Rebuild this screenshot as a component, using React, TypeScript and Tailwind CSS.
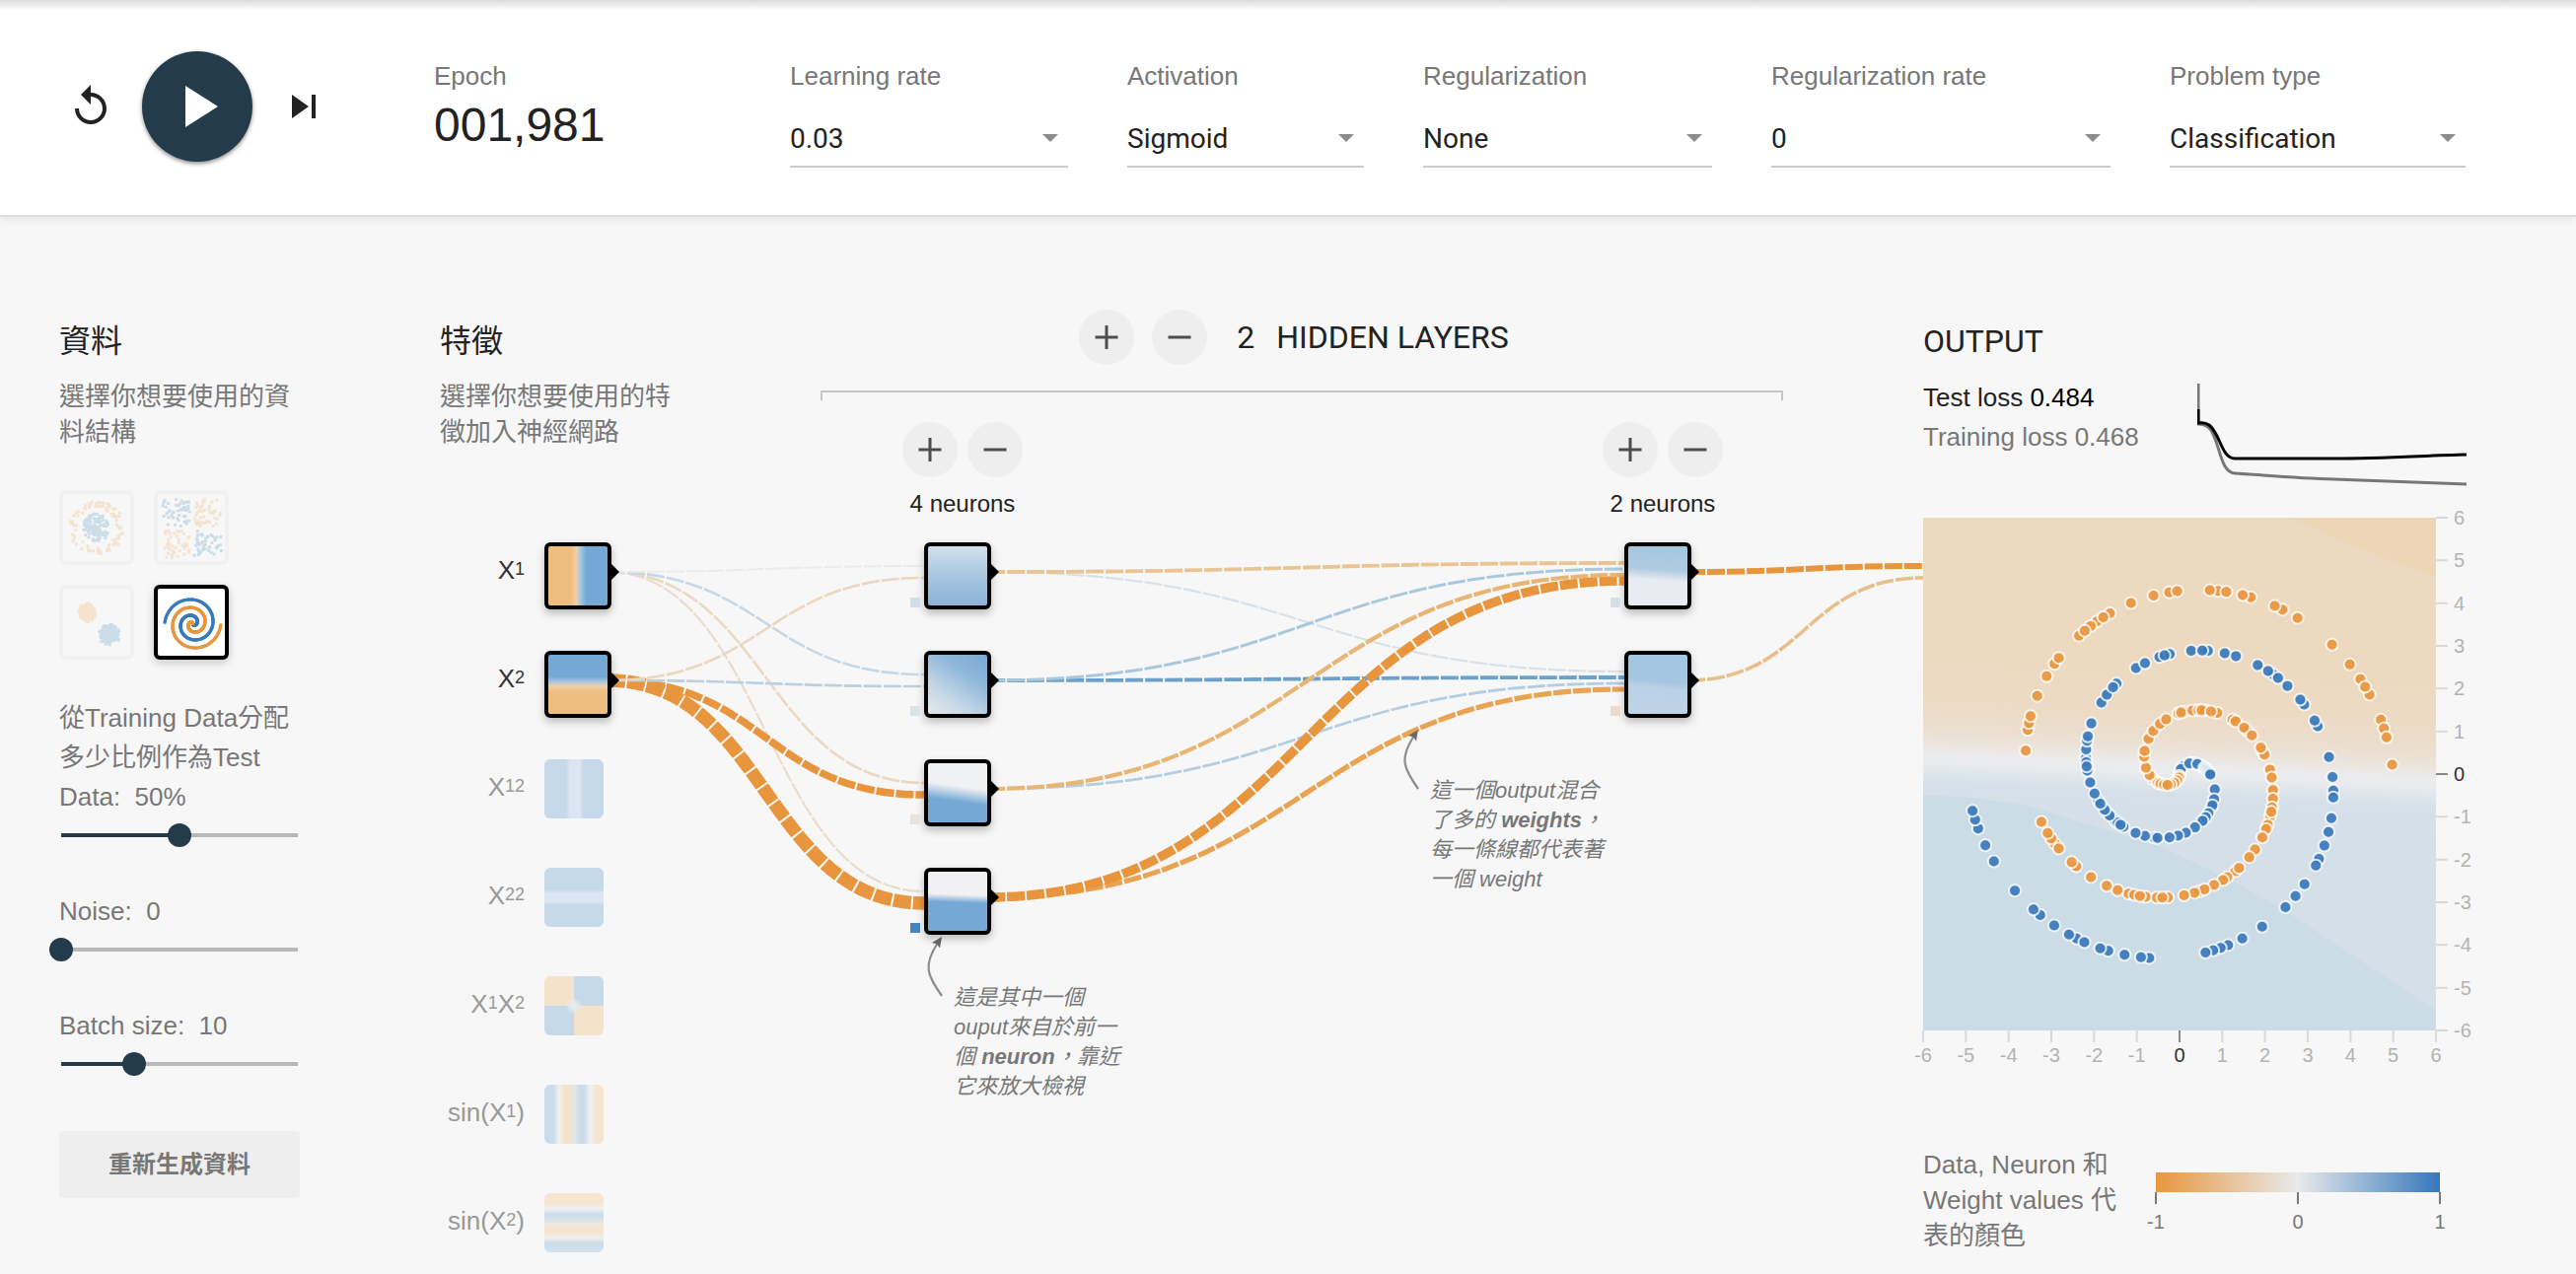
import React, { useLayoutEffect, useRef, useState } from "react";

const ORANGE = "#e8963e";

/* ---------- small helpers ---------- */

function seeded(seed: number) {
  let a = seed;
  return () => {
    a = (a + 0x6d2b79f5) | 0;
    let t = Math.imul(a ^ (a >>> 15), 1 | a);
    t = (t + Math.imul(t ^ (t >>> 7), 61 | t)) ^ t;
    return ((t ^ (t >>> 14)) >>> 0) / 4294967296;
  };
}

type Dot = { x: number; y: number; c: string };

function circleDots(): Dot[] {
  const rnd = seeded(7);
  const out: Dot[] = [];
  for (let i = 0; i < 120; i++) {
    const a = rnd() * Math.PI * 2;
    const r = rnd() * 14;
    out.push({ x: 34 + r * Math.cos(a), y: 34 + r * Math.sin(a), c: "#cbdde9" });
  }
  for (let i = 0; i < 90; i++) {
    const a = rnd() * Math.PI * 2;
    const r = 20 + rnd() * 8;
    out.push({ x: 34 + r * Math.cos(a), y: 34 + r * Math.sin(a), c: "#f5e3cf" });
  }
  return out;
}

function xorDots(): Dot[] {
  const rnd = seeded(21);
  const out: Dot[] = [];
  for (let i = 0; i < 190; i++) {
    let x = rnd() * 56 - 28;
    let y = rnd() * 56 - 28;
    x += x > 0 ? 2 : -2;
    y += y > 0 ? 2 : -2;
    out.push({ x: 35 + x, y: 35 + y, c: x * y > 0 ? "#cbdde9" : "#f5e3cf" });
  }
  return out;
}

function gaussDots(): Dot[] {
  const rnd = seeded(5);
  const out: Dot[] = [];
  const blob = (cx: number, cy: number, size: number, c: string) => {
    for (let i = 0; i < 220; i++) {
      const a = rnd() * Math.PI * 2;
      const r = ((rnd() + rnd() + rnd()) / 3) * size;
      out.push({ x: cx + r * Math.cos(a), y: cy + r * Math.sin(a), c });
    }
  };
  blob(24, 24, 11, "#f5e3cf");
  blob(47, 46, 13, "#cbdde9");
  return out;
}

function spiralAt(i: number, sign: number) {
  const r = i * 0.02;
  const t = 0.7 * Math.PI * r;
  return { x: sign * r * Math.sin(t), y: sign * r * Math.cos(t) };
}

function spiralDots(): Dot[] {
  const out: Dot[] = [];
  for (let i = 0; i < 250; i++) {
    const b = spiralAt(i, 1);
    out.push({ x: 35.5 + b.x * 5.7, y: 35.5 + b.y * 5.7, c: "#3a7abb" });
  }
  for (let i = 0; i < 250; i++) {
    const o = spiralAt(i, -1);
    out.push({ x: 35.5 + o.x * 5.7, y: 35.5 + o.y * 5.7, c: ORANGE });
  }
  return out;
}

/* ---------- header ---------- */

function Picker({ id, label, value }: { id: string; label: string; value: string }) {
  return (
    <div className="min-w-0">
      <label htmlFor={id} className="block text-[26px] leading-9 text-[#777]">
        {label}
      </label>
      <div className="relative mt-[25px] border-b-2 border-[#ccc]">
        <select
          id={id}
          defaultValue={value}
          className="h-12 w-full appearance-none bg-transparent pr-10 pb-1.5 text-[28px] text-[#222] outline-none font-['Roboto',sans-serif]"
        >
          <option>{value}</option>
        </select>
        <svg className="pointer-events-none absolute top-4 right-[10px] h-2 w-4" viewBox="0 0 16 8">
          <path d="M0 0h16l-8 8z" fill="#8c8c8c" />
        </svg>
      </div>
    </div>
  );
}

function Header() {
  return (
    <header className="flex h-[220px] items-start border-b-2 border-[#dcdcdc] bg-white bg-[linear-gradient(#dadada,#ffffff_10px)] pr-28 pl-[68px] shadow-[0_0_10px_rgba(0,0,0,0.12)]">
      <div className="mt-[52px] flex shrink-0 items-center gap-7">
        <button aria-label="Reset" className="h-12 w-12 text-[#222]">
          <svg viewBox="0 0 24 24" fill="currentColor">
            <path d="M12 5V1L7 6l5 5V7c3.31 0 6 2.69 6 6s-2.69 6-6 6-6-2.69-6-6H4c0 4.42 3.58 8 8 8s8-3.58 8-8-3.58-8-8-8z" />
          </svg>
        </button>
        <button
          aria-label="Run"
          className="flex h-28 w-28 items-center justify-center rounded-full bg-[#233b4b] text-white shadow-[0_2px_4px_rgba(0,0,0,0.45)]"
        >
          <svg viewBox="0 0 24 24" fill="currentColor" className="h-[72px] w-[72px]">
            <path d="M8 5v14l11-7z" />
          </svg>
        </button>
        <button aria-label="Step" className="h-12 w-12 text-[#222]">
          <svg viewBox="0 0 24 24" fill="currentColor">
            <path d="M6 18l8.5-6L6 6v12zM16 6v12h2V6h-2z" />
          </svg>
        </button>
      </div>
      <div className="mt-[59px] ml-[108px] w-[361px] shrink-0">
        <div className="text-[26px] leading-9 text-[#777]">Epoch</div>
        <div className="text-5xl leading-[64px] text-[#222]">001,981</div>
      </div>
      <div className="mt-[59px] grid flex-1 grid-cols-[282fr_240fr_293fr_344fr_300fr] gap-[60px]">
        <Picker id="rate" label="Learning rate" value="0.03" />
        <Picker id="activation" label="Activation" value="Sigmoid" />
        <Picker id="regularization" label="Regularization" value="None" />
        <Picker id="regrate" label="Regularization rate" value="0" />
        <Picker id="problem" label="Problem type" value="Classification" />
      </div>
    </header>
  );
}

/* ---------- data column ---------- */

function Thumb({ dots, label, selected }: { dots: Dot[]; label: string; selected?: boolean }) {
  return (
    <button
      aria-label={label}
      aria-pressed={!!selected}
      className={
        selected
          ? "h-[76px] w-[76px] rounded-md border-4 border-black bg-white shadow-[0_3px_10px_rgba(0,0,0,0.2)]"
          : "h-[76px] w-[76px] rounded-md border-4 border-[#f1f1f1]"
      }
    >
      <svg viewBox="0 0 68 68" className="block">
        {dots.map((d, i) => (
          <rect key={i} x={d.x - 1.5} y={d.y - 1.5} width="3" height="3" rx="0.7" fill={d.c} />
        ))}
      </svg>
    </button>
  );
}

function Slider(props: {
  id: string;
  label: string;
  min: number;
  max: number;
  value: number;
}) {
  const { id, label, min, max, value } = props;
  const part = ((value - min) / (max - min)) * 100;
  return (
    <div>
      <label htmlFor={id} className="block text-[26px] leading-10 whitespace-pre-wrap text-[#777]">
        {label}
      </label>
      <div className="relative mx-0.5 mt-[7px] flex h-6 items-center">
        <div className="h-1 w-full bg-[#b8b8b8]">
          <div className="h-full bg-[#233b4b]" style={{ width: `${part}%` }} />
        </div>
        <input
          id={id}
          type="range"
          min={min}
          max={max}
          defaultValue={value}
          className="absolute inset-y-0 -left-3 w-[calc(100%+24px)] appearance-none bg-transparent [&::-webkit-slider-thumb]:h-6 [&::-webkit-slider-thumb]:w-6 [&::-webkit-slider-thumb]:appearance-none [&::-webkit-slider-thumb]:rounded-full [&::-webkit-slider-thumb]:bg-[#233b4b]"
        />
      </div>
    </div>
  );
}

function DataColumn() {
  return (
    <section className="w-[244px] shrink-0">
      <h2 className="text-[32px] leading-10 text-[#222]">資料</h2>
      <p className="mt-[18px] text-[26px] leading-9 text-[#777]">選擇你想要使用的資料結構</p>
      <div className="mt-[41px] grid w-[172px] grid-cols-2 gap-5">
        <Thumb dots={circleDots()} label="Circle" />
        <Thumb dots={xorDots()} label="Exclusive or" />
        <Thumb dots={gaussDots()} label="Gaussian" />
        <Thumb dots={spiralDots()} label="Spiral" selected />
      </div>
      <div className="mt-[39px] flex flex-col gap-[45px]">
        <Slider id="split" label={"從Training Data分配多少比例作為Test Data:  50%"} min={10} max={90} value={50} />
        <Slider id="noise" label={"Noise:  0"} min={0} max={50} value={0} />
        <Slider id="batch" label={"Batch size:  10"} min={1} max={30} value={10} />
      </div>
      <button className="mt-14 h-[68px] w-full rounded bg-[#eee] text-2xl font-bold text-[#777]">
        重新生成資料
      </button>
    </section>
  );
}

/* ---------- network ---------- */

function Sub({ children }: { children: React.ReactNode }) {
  return <span className="align-[4px] text-lg leading-none">{children}</span>;
}

const FEATURES: { key: string; label: React.ReactNode; fill: string; on?: boolean }[] = [
  {
    key: "x",
    label: <>X<Sub>1</Sub></>,
    fill: "bg-[linear-gradient(90deg,#f0bd80_38%,#f0d0a6_47%,#a8c8de_54%,#75a8d4_64%)]",
    on: true,
  },
  {
    key: "y",
    label: <>X<Sub>2</Sub></>,
    fill: "bg-[linear-gradient(180deg,#75a8d4_37%,#a8c8de_46%,#f0d0a6_53%,#f0bd80_63%)]",
    on: true,
  },
  {
    key: "xx",
    label: <>X<Sub>12</Sub></>,
    fill: "bg-[linear-gradient(90deg,#c5d9ea_37%,#dbe6f1_43%,#dbe6f1_60%,#c5d9ea_66%)]",
  },
  {
    key: "yy",
    label: <>X<Sub>22</Sub></>,
    fill: "bg-[linear-gradient(180deg,#c5d9ea_37%,#dbe6f1_43%,#dbe6f1_57%,#c5d9ea_63%)]",
  },
  {
    key: "xy",
    label: <>X<Sub>1</Sub>X<Sub>2</Sub></>,
    fill: "bg-[radial-gradient(circle_at_center,#e8ebee_6%,transparent_20%),conic-gradient(#c5d9ea_25%,#f5e2ca_25%_50%,#c5d9ea_50%_75%,#f5e2ca_75%)]",
  },
  {
    key: "sinx",
    label: <>sin(X<Sub>1</Sub>)</>,
    fill: "bg-[linear-gradient(90deg,#cadcea_15%,#f0f1f2_25%,#f5e2ca_34%,#f5e2ca_42%,#e1e8e9_51%,#cadcea_60%,#cadcea_68%,#f0f1f2_77%,#f5e5d1_87%)]",
  },
  {
    key: "siny",
    label: <>sin(X<Sub>2</Sub>)</>,
    fill: "bg-[linear-gradient(180deg,#f5e5d1_17%,#f0f1f2_26%,#cadcea_36%,#d5e2ec_44%,#f2e8dc_53%,#f5e2ca_64%,#f2f0ec_75%,#cadcea_85%,#d2e0ed_100%)]",
  },
];

function Tile({ fill, bias }: { fill: string; bias?: string }) {
  return (
    <div className="relative z-10 h-[68px] w-[68px]">
      {bias && <div className={"absolute top-14 -left-3.5 h-2.5 w-2.5 " + bias} />}
      <div className="h-full w-full rounded-md border-4 border-black bg-black shadow-[0_4px_9px_rgba(0,0,0,0.25)]">
        <div className={"h-full w-full rounded-[2px] " + fill} />
      </div>
      <svg className="absolute top-[21px] left-[67px] h-[18px] w-[9px]" viewBox="0 0 9 18">
        <path d="M0 0l9 9-9 9z" />
      </svg>
    </div>
  );
}

function RoundButton({ kind, label }: { kind: "plus" | "minus"; label: string }) {
  return (
    <button
      aria-label={label}
      className="flex h-14 w-14 shrink-0 items-center justify-center rounded-full bg-[#eee] text-[#4d4d4d]"
    >
      <svg viewBox="0 0 24 24" className="h-6 w-6" fill="currentColor">
        <path d={kind === "plus" ? "M10.5 0h3v10.5h10v3h-10V24h-3V13.5h-10v-3h10z" : "M.5 10.5h23v3H.5z"} />
      </svg>
    </button>
  );
}

const LAYERS = [
  [
    { fill: "bg-[linear-gradient(180deg,#d3e0ec,#abc9e1_45%,#8ab3d8)]", bias: "bg-[#d0dee7]" },
    { fill: "bg-[linear-gradient(35deg,#e5e9ec,#c6d7e6_30%,#8db7d9_68%,#78aad3)]", bias: "bg-[#dae3e7]" },
    { fill: "bg-[linear-gradient(188deg,#f0f1f3_40%,#a5c5e0_54%,#75a8d4_63%)]", bias: "bg-[#eae2dc]" },
    { fill: "bg-[linear-gradient(182deg,#f1f1f3_39%,#75a8d4_52%)]", bias: "bg-[#4585bf]" },
  ],
  [
    { fill: "bg-[linear-gradient(184deg,#a4c6e0,#afcbe2_40%,#e8ebf2_57%)]", bias: "bg-[#d3e0e6]" },
    { fill: "bg-[linear-gradient(186deg,#a4c6e0_45%,#bad0e6_55%,#c0d4e6)]", bias: "bg-[#e9dccb]" },
  ],
];

function Layer({ nodes }: { nodes: { fill: string; bias: string }[] }) {
  return (
    <div className="w-[122px]">
      <div className="flex justify-between">
        <RoundButton kind="plus" label="Add neuron" />
        <RoundButton kind="minus" label="Remove neuron" />
      </div>
      <div className="mt-[13px] text-center text-2xl leading-7 text-[#222]">{nodes.length} neurons</div>
      <div className="mt-[25px] ml-[22px] flex flex-col gap-[42px]">
        {nodes.map((n, i) => (
          <Tile key={i} fill={n.fill} bias={n.bias} />
        ))}
      </div>
    </div>
  );
}

const FIRST = [
  ["#e9ebec", 2, "#e9d7bf", 2.6],
  ["#c7d7e4", 2.6, "#bccfdf", 2.6],
  ["#e9d8c2", 2.6, ORANGE, 7.5],
  ["#e9dccd", 2.2, ORANGE, 13.5],
] as const;

const SECOND = [
  ["#e9c594", 3.8, "#aac8dd", 3, "#e8b572", 4.2, ORANGE, 9.4],
  ["#d9e1e7", 2.2, "#6ba1cd", 3.8, "#b4cde0", 2.8, "#e8a353", 5.2],
] as const;

function linksFor(width: number) {
  const out: { d: string; c: string; w: number }[] = [];
  const add = (x1: number, row1: number, x2: number, row2: number, i: number, n: number, c: string, w: number) => {
    const y1 = 254 + row1 * 110;
    const y2 = 254 + row2 * 110 + ((i - (n - 1) / 2) / n) * 24;
    const m = (x1 + x2) / 2;
    out.push({ d: `M${x1},${y1}C${m},${y1} ${m},${y2} ${x2},${y2}`, c, w });
  };
  FIRST.forEach((f, j) => {
    add(170, 0, 491, j, 0, 2, f[0], f[1]);
    add(170, 1, 491, j, 1, 2, f[2], f[3]);
  });
  SECOND.forEach((s, j) => {
    for (let i = 0; i < 4; i++) {
      add(555, i, width - 303, j, i, 4, s[i * 2] as string, s[i * 2 + 1] as number);
    }
  });
  add(width - 239, 0, width, 0, 0, 2, ORANGE, 6);
  add(width - 239, 1, width, 0, 1, 2, "#e8bf8b", 3.6);
  return out.reverse();
}

function PointerArrow() {
  return (
    <svg viewBox="0 0 28 62" className="h-[62px] w-7 shrink-0">
      <path d="M24 61C10 41 4 31 20 7" fill="none" stroke="#8c8c8c" strokeWidth="2.2" />
      <path d="M24 1l-10 6 5 1.500 3 4z" fill="#6b6b6b" />
    </svg>
  );
}

function Network() {
  const box = useRef<HTMLElement>(null);
  const [width, setWidth] = useState(1504);
  useLayoutEffect(() => {
    const el = box.current;
    if (!el) return;
    const read = () => setWidth(el.clientWidth);
    read();
    const watcher = new ResizeObserver(read);
    watcher.observe(el);
    return () => watcher.disconnect();
  }, []);

  return (
    <section ref={box} className="relative ml-[142px] flex min-w-0 flex-1 items-start">
      <svg className="absolute inset-0 h-full w-full overflow-visible" aria-hidden="true">
        {linksFor(width).map((l, i) => (
          <path key={i} d={l.d} fill="none" stroke={l.c} strokeWidth={l.w} strokeDasharray="18 2" />
        ))}
      </svg>

      <div className="w-[244px] shrink-0">
        <h2 className="text-[32px] leading-10 text-[#222]">特徵</h2>
        <p className="mt-[18px] text-[26px] leading-9 text-[#777]">選擇你想要使用的特徵加入神經網路</p>
        <ul className="mt-[94px] flex flex-col gap-[42px]">
          {FEATURES.map((f) => (
            <li key={f.key} className="flex h-[68px] items-start gap-5">
              <span
                className={
                  f.on
                    ? "w-[86px] text-right text-[26px] leading-[56px] text-[#333]"
                    : "w-[86px] text-right text-[26px] leading-[56px] text-[#999]"
                }
              >
                {f.label}
              </span>
              {f.on ? <Tile fill={f.fill} /> : <div className={"h-[60px] w-[60px] rounded-md " + f.fill} />}
            </li>
          ))}
        </ul>
      </div>

      <div className="-mt-3 mr-[142px] ml-[142px] flex-1">
        <div className="flex items-center justify-center pr-4">
          <RoundButton kind="plus" label="Add layer" />
          <span className="w-[18px]" />
          <RoundButton kind="minus" label="Remove layer" />
          <h2 className="ml-[30px] flex gap-[22px] text-[32px] leading-10 text-[#222] font-['Roboto',sans-serif]">
            <span>2</span>
            <span>HIDDEN LAYERS</span>
          </h2>
        </div>
        <div className="mt-[26px] h-2.5 border-x-2 border-t-2 border-[#c6c6c6]" />
        <div className="mt-[22px] flex items-start justify-between pr-[61px] pl-[83px]">
          {LAYERS.map((nodes, i) => (
            <Layer key={i} nodes={nodes} />
          ))}
        </div>
      </div>

      <div className="absolute top-[623px] left-[485px] flex items-start gap-2 text-[22px] leading-[30px] text-[#777] italic">
        <PointerArrow />
        <p className="mt-[48px] whitespace-nowrap">
          這是其中一個
          <br />
          ouput來自於前一
          <br />個 <b>neuron</b>，靠近
          <br />
          它來放大檢視
        </p>
      </div>
      <div className="absolute top-[413px] right-[318px] flex w-[218px] items-start gap-2 text-[22px] leading-[30px] text-[#777] italic">
        <PointerArrow />
        <p className="mt-[48px] whitespace-nowrap">
          這一個output混合
          <br />
          了多的 <b>weights</b>，
          <br />
          每一條線都代表著
          <br />
          一個 weight
        </p>
      </div>
    </section>
  );
}

/* ---------- output column ---------- */

const BLUE_POINTS = [
  1, 3, 4, 8, 10, 6, 18, 20, 22, 17, 26, 28, 24, 30, 31, 32, 33, 34, 35, 36, 45, 50, 54, 53, 57, 59, 61, 65, 69, 72, 75,
  80, 79, 83, 86, 90, 93, 92, 91, 96, 95, 97, 100, 99, 102, 105, 108, 111, 110, 109, 113, 115, 116, 119, 124, 126, 129,
  128, 134, 136, 139, 141, 140, 145, 148, 147, 151, 153, 157, 160, 159, 161, 163, 167, 166, 171, 170, 176, 179, 181,
  182, 185, 187, 189, 191, 192, 195, 197, 199, 203, 206, 208, 209, 210, 211, 218, 219, 221, 223, 224, 227, 226, 228,
  230, 232, 233, 236, 240, 242, 244, 245, 246,
];
const ORANGE_POINTS = [
  2, 4, 8, 12, 16, 31, 28, 27, 25, 22, 19, 35, 40, 46, 49, 55, 59, 63, 66, 71, 73, 72, 76, 78, 80, 79, 84, 82, 89, 90,
  94, 93, 96, 101, 102, 100, 106, 108, 111, 113, 117, 115, 116, 119, 120, 122, 125, 127, 131, 130, 133, 134, 136, 139,
  138, 140, 142, 145, 147, 146, 149, 152, 151, 150, 154, 156, 159, 162, 163, 167, 168, 166, 169, 171, 182, 185, 186,
  187, 190, 193, 195, 196, 200, 203, 202, 201, 205, 204, 208, 211, 213, 214, 219, 218, 220, 223, 222, 227, 226, 229,
  234, 237, 239, 241, 240, 244, 245, 246, 249,
];

const UNIT = 520 / 12;

function Heatmap() {
  const ticks = Array.from({ length: 13 }, (_, i) => i - 6);
  const dot = (i: number, sign: number, color: string) => {
    const p = spiralAt(i, sign);
    return (
      <circle
        key={color + i}
        cx={260 + p.x * UNIT}
        cy={260 - p.y * UNIT}
        r="6"
        fill={color}
        fillOpacity="0.93"
        stroke="#fff"
        strokeOpacity="0.8"
        strokeWidth="2"
      />
    );
  };
  return (
    <svg width="560" height="560" viewBox="0 0 560 560" className="mt-8 block overflow-visible" role="img" aria-label="Output">
      <defs>
        <linearGradient id="field" gradientUnits="userSpaceOnUse" x1="260" y1="146" x2="251" y2="326">
          <stop offset="0" stopColor="#ecd9c0" />
          <stop offset="0.25" stopColor="#ecdac3" />
          <stop offset="0.36" stopColor="#ecdcc9" />
          <stop offset="0.46" stopColor="#ebe0d2" />
          <stop offset="0.54" stopColor="#ebe6e0" />
          <stop offset="0.59" stopColor="#ececee" />
          <stop offset="0.64" stopColor="#e9ebee" />
          <stop offset="0.68" stopColor="#e0e7ec" />
          <stop offset="0.75" stopColor="#d6e0e9" />
          <stop offset="1" stopColor="#d5dfe8" />
        </linearGradient>
      </defs>
      <rect width="520" height="520" fill="url(#field)" />
      <path d="M373 0L420 22L470 42L520 60V0z" fill="#edd6b6" />
      <path d="M0 281L50 284L106 292L154 307L241 334L306 364L371 401L440 447L520 500V520H0z" fill="#cbdce6" />
      {BLUE_POINTS.map((i) => dot(i, 1, "#3a7abb"))}
      {ORANGE_POINTS.map((i) => dot(i, -1, ORANGE))}
      {ticks.map((t) => (
        <g key={t} fontSize="20" fill={t === 0 ? "#333" : "#b3b3b3"} stroke="none">
          <path
            d={`M${260 + t * UNIT} 520v12M520 ${260 - t * UNIT}h12`}
            stroke={t === 0 ? "#888" : "#d9d9d9"}
            strokeWidth="2"
            fill="none"
          />
          <text x={260 + t * UNIT} y="552" textAnchor="middle">
            {t}
          </text>
          <text x="538" y={267 - t * UNIT}>
            {t}
          </text>
        </g>
      ))}
    </svg>
  );
}

function OutputColumn() {
  return (
    <section className="w-[560px] shrink-0">
      <h2 className="text-[32px] leading-10 text-[#222] font-['Roboto',sans-serif]">OUTPUT</h2>
      <div className="mt-[17px] flex items-start">
        <div className="w-[278px] text-[26px] leading-10">
          <div className="text-[#222]">
            Test loss <span className="text-black">0.484</span>
          </div>
          <div className="text-[#777]">Training loss 0.468</div>
        </div>
        <svg width="273" height="104" viewBox="0 0 273 104" fill="none" strokeWidth="3" className="mt-1.5 block">
          <path d="M1 0V41C6 41 9 42 12 45C23 56 22 90 38 91C70 93 100 96 139 97L273 102" stroke="#777" />
          <path d="M1 26V40C6 39 9 40 12 42C24 52 24 75 38 76H139C190 76 230 73 273 72" stroke="#000" />
        </svg>
      </div>
      <Heatmap />
      <div className="mt-[78px] flex items-start">
        <p className="w-[236px] pr-7 text-[26px] leading-9 text-[#777]">Data, Neuron 和 Weight values 代表的顏色</p>
        <div className="mt-[26px] w-[288px]">
          <div className="h-5 bg-[linear-gradient(90deg,#e8963e,#e8eaeb_50%,#3577bb)]" />
          <div className="-mx-px flex justify-between">
            <i className="h-3 w-0.5 bg-[#777]" />
            <i className="h-3 w-0.5 bg-[#777]" />
            <i className="h-3 w-0.5 bg-[#777]" />
          </div>
          <div className="-mx-4 mt-1.5 flex justify-between text-xl leading-6 text-[#777]">
            <span className="w-8 text-center">-1</span>
            <span className="w-8 text-center">0</span>
            <span className="w-8 text-center">1</span>
          </div>
        </div>
      </div>
    </section>
  );
}

export default function App() {
  return (
    <div
      lang="zh-Hant"
      className="min-h-screen min-w-[2200px] bg-[#f7f7f7] font-['Liberation_Sans','Noto_Sans_CJK_TC',sans-serif]"
    >
      <Header />
      <main className="flex items-start pt-[106px] pr-[102px] pl-[60px]">
        <DataColumn />
        <Network />
        <OutputColumn />
      </main>
    </div>
  );
}
